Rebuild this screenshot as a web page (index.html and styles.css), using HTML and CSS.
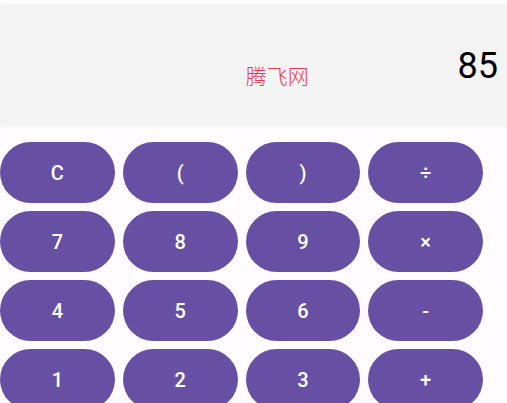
FILE: index.html
```html
<!DOCTYPE html>
<html lang="zh">
<head>
	<meta charset="UTF-8">
	<meta name="viewport" content="width=device-width, initial-scale=1.0">
	<title>计算器</title>
	<link rel="stylesheet" href="styles.css">
</head>
<body>
	<div class="display">
		<div class="display__brand">腾飞网</div>
		<div class="display__value">85</div>
	</div>

	<div class="keys">
		<button class="key">C</button>
		<button class="key">(</button>
		<button class="key">)</button>
		<button class="key">÷</button>

		<button class="key">7</button>
		<button class="key">8</button>
		<button class="key">9</button>
		<button class="key">×</button>

		<button class="key">4</button>
		<button class="key">5</button>
		<button class="key">6</button>
		<button class="key">-</button>

		<button class="key">1</button>
		<button class="key">2</button>
		<button class="key">3</button>
		<button class="key">+</button>
	</div>
</body>
</html>
```

FILE: styles.css
```css
body {
	margin: 0;
	padding-top: 4px;
	background: #fffbfe;
	font-family: Roboto, "Noto Sans", sans-serif;
	overflow: hidden;
}
.display {
	display: flex;
	align-items: center;
	height: 123px;
	background: #f4f4f4;
	border-radius: 4px 0 0 4px;
}
.display__brand {
	flex: 1;
	padding-left: 97px;
	margin-top: 18px;
	text-align: center;
	font-family: "Noto Sans CJK SC", sans-serif;
	font-weight: 300;
	font-size: 21px;
	color: #ec3a44;
}
.display__value {
	padding-right: 9px;
	font-size: 36px;
	color: #000;
}
.keys {
	display: grid;
	grid-template-columns: repeat(4, 1fr);
	gap: 8px;
	width: 483px;
	margin-top: 15px;
}
.key {
	height: 61px;
	border: none;
	border-radius: 31px;
	background: #6750a4;
	color: #fff;
	font-family: Roboto, sans-serif;
	font-weight: 500;
	font-size: 20px;
	padding: 0;
}
```
